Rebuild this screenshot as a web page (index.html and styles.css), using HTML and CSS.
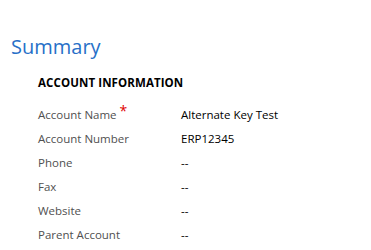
FILE: index.html
```html
<!DOCTYPE html>
<html>
<head>
<meta charset="utf-8">
<link rel="stylesheet" href="styles.css">
</head>
<body>
<div class="page">
  <h1 class="title">Summary</h1>
  <section class="section">
    <h2 class="section-title">ACCOUNT INFORMATION</h2>
    <div class="fields">
      <div class="row"><span class="label">Account Name<span class="req">*</span></span><span class="value">Alternate Key Test</span></div>
      <div class="row"><span class="label">Account Number</span><span class="value">ERP12345</span></div>
      <div class="row"><span class="label">Phone</span><span class="value">--</span></div>
      <div class="row"><span class="label">Fax</span><span class="value">--</span></div>
      <div class="row"><span class="label">Website</span><span class="value">--</span></div>
      <div class="row"><span class="label">Parent Account</span><span class="value">--</span></div>
    </div>
  </section>
</div>
</body>
</html>
```
FILE: styles.css
```css
html, body {
  margin: 0;
  padding: 0;
  background: #ffffff;
}
.page {
  font-family: "Open Sans", "Noto Sans", sans-serif;
  padding: 33px 0 0 11px;
}
.title {
  margin: 0;
  font-size: 20px;
  line-height: 28px;
  font-weight: normal;
  color: #2770c8;
}
.section {
  padding-left: 27px;
  margin-top: 14px;
}
.section-title {
  margin: 0;
  font-size: 11.5px;
  font-weight: bold;
  line-height: 16px;
  letter-spacing: 0.1px;
  color: #000000;
}
.fields {
  margin-top: 12px;
  display: flex;
  flex-direction: column;
}
.row {
  display: grid;
  grid-template-columns: 143px 1fr;
  height: 24px;
  line-height: 24px;
  font-size: 11.5px;
}
.label {
  color: #505050;
}
.value {
  color: #000000;
}
.req {
  color: #e00000;
  font-size: 14px;
  vertical-align: 3px;
  line-height: 0;
  margin-left: 3px;
}
```
